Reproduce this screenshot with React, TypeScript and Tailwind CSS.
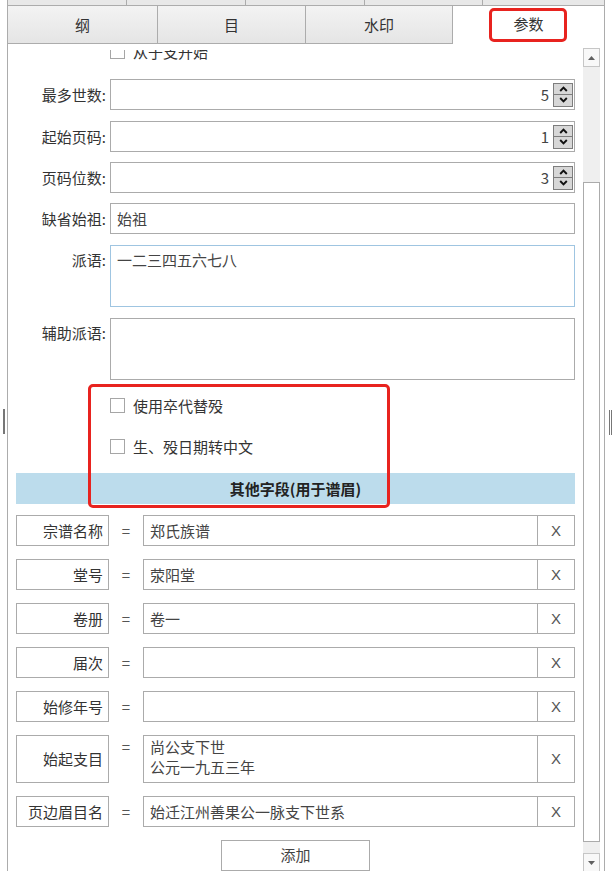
import type { ReactNode } from 'react'

const Check = () => <div className="h-[15px] w-[15px] shrink-0 border border-[#a6a6a6] bg-white" />

const Chevron = ({ up }: { up?: boolean }) => (
    <svg width="9" height="6" viewBox="0 0 9 6">
        <path d={up ? 'M1.2 5 L4.5 1.6 L7.8 5' : 'M1.2 1 L4.5 4.4 L7.8 1'} stroke="#111" strokeWidth="1.9" fill="none" />
    </svg>
)

const Spinner = () => (
    <div className="flex w-[20px] shrink-0 flex-col">
        <div className="flex h-[12px] items-center justify-center border border-[#7d7d7d] bg-[#d7d7d7]">
            <Chevron up />
        </div>
        <div className="-mt-px flex h-[13px] items-center justify-center border border-[#7d7d7d] bg-[#d7d7d7]">
            <Chevron />
        </div>
    </div>
)

const NumField = ({ label, value, mt }: { label: string; value: string; mt: string }) => (
    <div className={`flex h-[31px] items-center ${mt}`}>
        <div className="w-[94px] shrink-0 pr-[4px] text-right">{label}</div>
        <div className="flex h-full flex-1 items-center border border-[#ababab] pr-px">
            <span className="flex-1 pr-[4px] text-right text-[#444]">{value}</span>
            <Spinner />
        </div>
    </div>
)

const Pair = ({ k, v, mt }: { k: string; v: string; mt: string }) => (
    <div className={`flex h-[31px] ${mt}`}>
        <div className="flex w-[93px] shrink-0 items-center justify-end border border-[#ababab] pr-[5px]">{k}</div>
        <div className="flex w-[34px] shrink-0 items-center justify-center text-[#555]">=</div>
        <div className="flex flex-1 items-center border border-[#ababab] pl-[6px] text-[#444]">{v}</div>
        <div className="flex w-[37px] shrink-0 items-center justify-center border border-l-0 border-[#ababab] font-['Liberation_Sans',sans-serif] text-[#555]">
            X
        </div>
    </div>
)

const Tab = ({ w, first, children }: { w: string; first?: boolean; children?: ReactNode }) => (
    <div
        className={`flex h-[37px] items-center justify-center border-r border-[#acacac] bg-linear-to-b from-[#f3f3f3] to-[#e5e5e5] ${w} ${first ? 'border-l' : ''}`}
    >
        {children}
    </div>
)

const ScrollArrow = ({ up }: { up?: boolean }) => (
    <div className="flex h-[19px] shrink-0 items-center justify-center border border-[#c6c6c6] bg-[#f8f8f8]">
        <svg width="7" height="4" viewBox="0 0 7 4">
            <path d={up ? 'M0 4 L3.5 0 L7 4 Z' : 'M0 0 L3.5 4 L7 0 Z'} fill="#606060" />
        </svg>
    </div>
)

export default function App() {
    return (
        <div className="relative flex h-[871px] w-[615px] flex-col overflow-hidden bg-white font-['Noto_Sans_CJK_SC',sans-serif] text-[15px] leading-[20px] text-[#333]">
            {/* upper tab row, cut off */}
            <div className="flex h-[6px] pl-[7px]">
                <div className="w-[120px] border-x border-b border-[#acacac] bg-[#e8e8e8]" />
                <div className="w-[119px] border-r border-b border-[#acacac] bg-[#e8e8e8]" />
                <div className="w-[119px] border-r border-b border-[#acacac] bg-[#e8e8e8]" />
                <div className="w-[118px] border-r border-b border-[#acacac] bg-[#e8e8e8]" />
                <div className="w-[122px] border-r border-b border-[#acacac] bg-[#e8e8e8]" />
            </div>

            <div className="flex h-[37px] pl-[7px]">
                <Tab w="w-[151px]" first>纲</Tab>
                <Tab w="w-[148px]">目</Tab>
                <Tab w="w-[147px]">水印</Tab>
                <div className="relative z-10 -mt-px flex h-[39px] w-[152px] items-center justify-center border-t border-r border-[#acacac] bg-white pb-[2px]">
                    参数
                </div>
            </div>

            <div className="ml-[7px] flex min-h-0 w-[598px] flex-1 border-x border-t border-[#acacac]">
                <div className="mt-[6px] min-w-0 flex-1 overflow-hidden px-[8px]">
                    <div className="-mt-[6px] ml-[94px] flex h-[15px] items-center gap-[8px]">
                        <Check />
                        <span>从于支开始</span>
                    </div>

                    <NumField label="最多世数:" value="5" mt="mt-[20px]" />
                    <NumField label="起始页码:" value="1" mt="mt-[11px]" />
                    <NumField label="页码位数:" value="3" mt="mt-[10px]" />

                    <div className="mt-[10px] flex h-[31px] items-center">
                        <div className="w-[94px] shrink-0 pr-[4px] text-right">缺省始祖:</div>
                        <div className="flex h-full flex-1 items-center border border-[#ababab] pl-[6px] text-[#444]">始祖</div>
                    </div>

                    <div className="mt-[11px] flex items-start">
                        <div className="w-[94px] shrink-0 pr-[4px] pt-[5px] text-right">派语:</div>
                        <div className="h-[62px] flex-1 border border-[#9fc5e1] pl-[6px] pt-[4px] text-[#444]">一二三四五六七八</div>
                    </div>

                    <div className="mt-[11px] flex items-start">
                        <div className="w-[94px] shrink-0 pr-[4px] pt-[5px] text-right">辅助派语:</div>
                        <div className="h-[62px] flex-1 border border-[#ababab]" />
                    </div>

                    <div className="mt-[18px] ml-[94px] flex h-[15px] items-center gap-[8px]">
                        <Check />
                        <span>使用卒代替殁</span>
                    </div>
                    <div className="mt-[26px] ml-[94px] flex h-[15px] items-center gap-[8px]">
                        <Check />
                        <span>生、殁日期转中文</span>
                    </div>

                    <div className="mt-[19px] flex h-[31px] items-center justify-center bg-[#bcdcec] font-bold text-[#222]">
                        其他字段(用于谱眉)
                    </div>

                    <Pair k="宗谱名称" v="郑氏族谱" mt="mt-[11px]" />
                    <Pair k="堂号" v="荥阳堂" mt="mt-[13px]" />
                    <Pair k="卷册" v="卷一" mt="mt-[13px]" />
                    <Pair k="届次" v="" mt="mt-[13px]" />
                    <Pair k="始修年号" v="" mt="mt-[13px]" />

                    <div className="mt-[13px] flex h-[48px]">
                        <div className="flex w-[93px] shrink-0 items-center justify-end border border-[#ababab] pr-[5px]">始起支目</div>
                        <div className="w-[34px] shrink-0 pt-[2px] text-center text-[#555]">=</div>
                        <div className="flex flex-1 flex-col border border-[#ababab] pl-[6px] pt-[1px] text-[#444]">
                            <span>尚公支下世</span>
                            <span>公元一九五三年</span>
                        </div>
                        <div className="flex w-[37px] shrink-0 items-center justify-center border border-l-0 border-[#ababab] font-['Liberation_Sans',sans-serif] text-[#555]">
                            X
                        </div>
                    </div>

                    <Pair k="页边眉目名" v="始迁江州善果公一脉支下世系" mt="mt-[13px]" />

                    <div className="mx-auto mt-[13px] flex h-[31px] w-[149px] items-start justify-center border border-[#ababab] pt-[4px] text-[#444]">
                        添加
                    </div>
                </div>

                {/* scrollbar */}
                <div className="mt-[4px] mr-[4px] flex w-[17px] shrink-0 flex-col overflow-hidden bg-[#efefef]">
                    <ScrollArrow up />
                    <div className="h-[115px] shrink-0" />
                    <div className="h-[660px] shrink-0 border border-[#ababab] bg-white" />
                    <div className="h-[11px] shrink-0" />
                    <ScrollArrow />
                </div>
            </div>

            {/* annotations and splitter grips */}
            <div className="pointer-events-none absolute left-[489px] top-[8px] z-20 h-[34px] w-[78px] rounded-[5px] border-[3px] border-[#e8231f]" />
            <div className="pointer-events-none absolute left-[88px] top-[384px] z-20 h-[124px] w-[302px] rounded-[5px] border-[3px] border-[#e8231f]" />
            <div className="absolute left-[3px] top-[409px] h-[25px] w-[2px] bg-[#777]" />
            <div className="absolute left-[609px] top-[410px] h-[25px] w-px bg-[#777]" />
            <div className="absolute left-[611px] top-[410px] h-[25px] w-px bg-[#777]" />
        </div>
    )
}
